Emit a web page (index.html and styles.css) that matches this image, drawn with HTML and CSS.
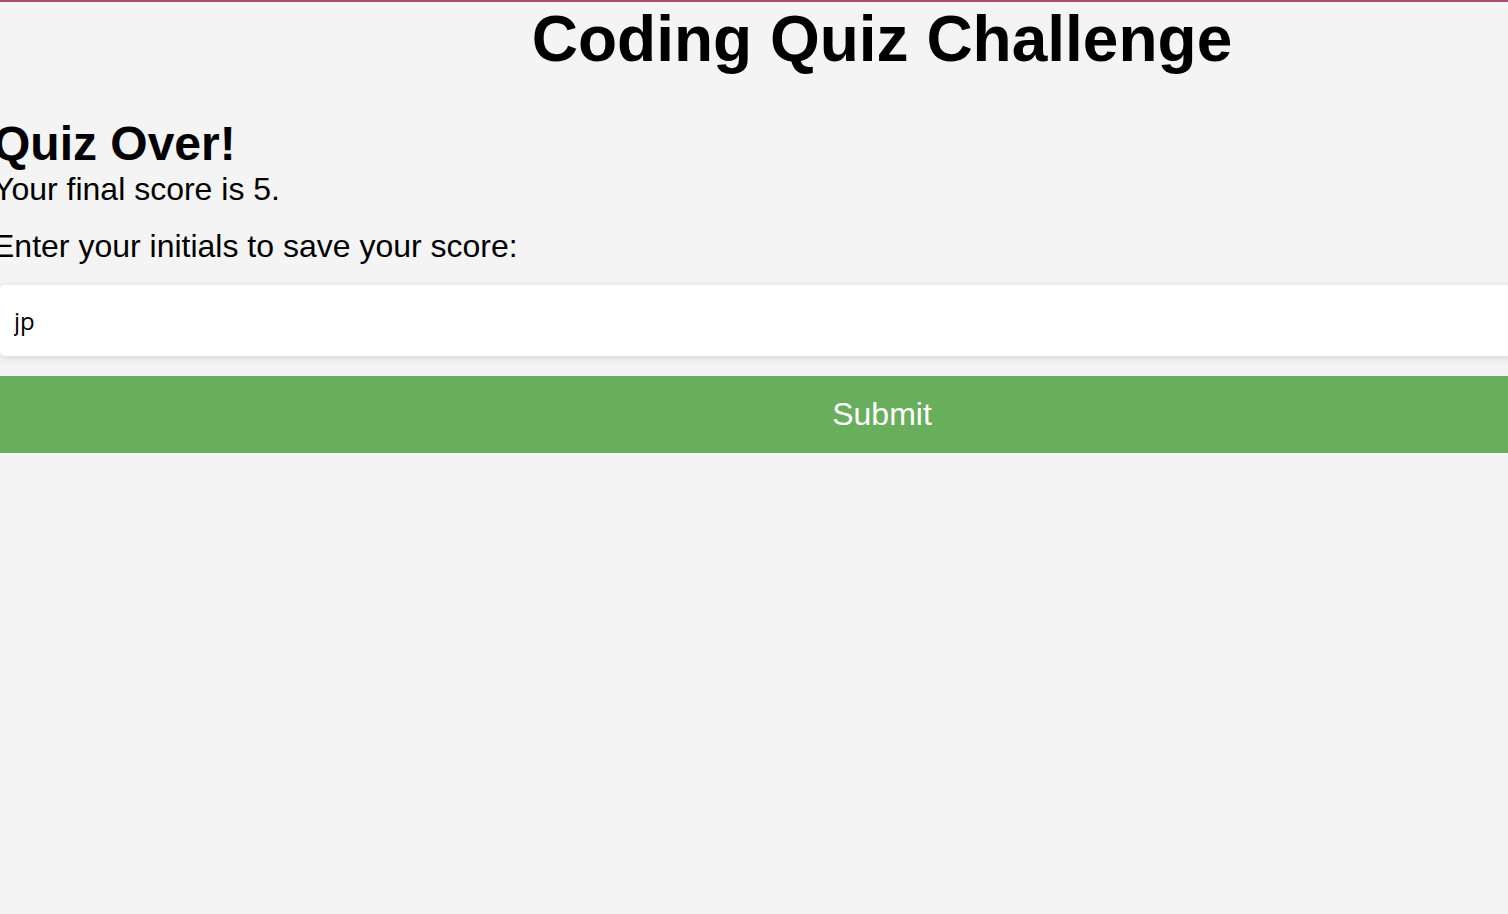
FILE: index.html
```html
<!DOCTYPE html>
<html lang="en">
<head>
<meta charset="utf-8">
<title>Coding Quiz Challenge</title>
<link rel="stylesheet" href="styles.css">
</head>
<body>
<div class="page">
  <header class="header">
    <h1 class="title">Coding Quiz Challenge</h1>
  </header>
  <main class="quiz">
    <h2 class="quiz-heading">Quiz Over!</h2>
    <p class="score">Your final score is 5.</p>
    <form class="save-form">
      <label class="save-label" for="initials">Enter your initials to save your score:</label>
      <input class="initials-input" id="initials" type="text" value="jp">
      <button class="submit-btn" type="button">Submit</button>
    </form>
  </main>
</div>
</body>
</html>
```

FILE: styles.css
```css
html, body {
  margin: 0;
  padding: 0;
  overflow: hidden;
}

body {
  background: #f4f4f4;
  border-top: 2px solid #a94f75;
  font-family: "Liberation Sans", Arial, sans-serif;
  color: #000;
  height: 912px;
}

.page {
  width: 1778px;
  margin-left: -7px;
}

.header {
  padding-top: 2px;
}

.title {
  margin: 0;
  font-size: 64px;
  font-weight: bold;
  text-align: center;
  line-height: 71.5px;
}

.quiz {
  display: flex;
  flex-direction: column;
  padding-top: 41px;
}

.quiz-heading {
  margin: 0;
  font-size: 48px;
  font-weight: bold;
  line-height: 54px;
}

.score {
  margin: 0;
  font-size: 32px;
  line-height: 36px;
}

.save-form {
  display: flex;
  flex-direction: column;
  margin-top: 21px;
}

.save-label {
  font-size: 32px;
  line-height: 36px;
}

.initials-input {
  margin: 21px 7px 0 7px;
  height: 71px;
  box-sizing: border-box;
  border: none;
  border-radius: 5px;
  background: #fff;
  box-shadow: 0 2px 8px rgba(0, 0, 0, 0.12);
  padding: 0 14px;
  font-family: "Open Sans", "Noto Sans", sans-serif;
  font-size: 24px;
  color: #000;
  outline: none;
}

.submit-btn {
  margin-top: 20px;
  height: 77px;
  border: none;
  background: #68ae5c;
  color: #fff;
  font-family: "Liberation Sans", Arial, sans-serif;
  font-size: 32px;
  text-align: center;
  padding: 0;
}
```
